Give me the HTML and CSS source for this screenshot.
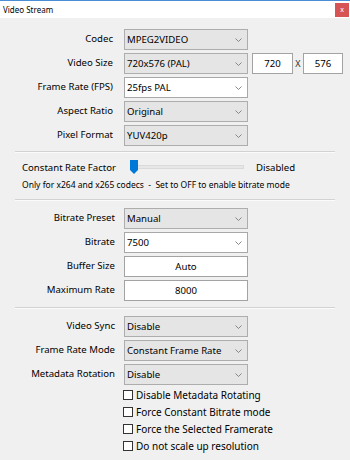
FILE: index.html
```html
<!DOCTYPE html>
<html>
<head>
<meta charset="utf-8">
<link rel="stylesheet" href="styles.css">
</head>
<body>
<div class="window">
  <div class="titlebar">
    <span class="title">Video Stream</span>
    <span class="close">x</span>
  </div>
  <div class="content">
    <div class="form form-top">
      <span class="lbl">Codec</span>
      <div class="combo ro"><span>MPEG2VIDEO</span><svg class="chev" width="7" height="4" viewBox="0 0 7 4"><path d="M0.5 0.5 L3.5 3.5 L6.5 0.5" fill="none" stroke="#7a7a7a" stroke-width="0.9"/></svg></div>

      <span class="lbl">Video Size</span>
      <div class="combo ro"><span>720x576 (PAL)</span><svg class="chev" width="7" height="4" viewBox="0 0 7 4"><path d="M0.5 0.5 L3.5 3.5 L6.5 0.5" fill="none" stroke="#7a7a7a" stroke-width="0.9"/></svg></div>
      <div class="extra">
        <div class="tbox w41">720</div>
        <span class="xsep">X</span>
        <div class="tbox w40">576</div>
      </div>

      <span class="lbl">Frame Rate (FPS)</span>
      <div class="combo ed"><span>25fps PAL</span><svg class="chev" width="7" height="4" viewBox="0 0 7 4"><path d="M0.5 0.5 L3.5 3.5 L6.5 0.5" fill="none" stroke="#7a7a7a" stroke-width="0.9"/></svg></div>

      <span class="lbl">Aspect Ratio</span>
      <div class="combo ro"><span>Original</span><svg class="chev" width="7" height="4" viewBox="0 0 7 4"><path d="M0.5 0.5 L3.5 3.5 L6.5 0.5" fill="none" stroke="#7a7a7a" stroke-width="0.9"/></svg></div>

      <span class="lbl">Pixel Format</span>
      <div class="combo ro"><span>YUV420p</span><svg class="chev" width="7" height="4" viewBox="0 0 7 4"><path d="M0.5 0.5 L3.5 3.5 L6.5 0.5" fill="none" stroke="#7a7a7a" stroke-width="0.9"/></svg></div>
    </div>

    <div class="sep sep1"></div>

    <div class="crf">
      <div class="crf-row">
        <span class="crf-lbl">Constant Rate Factor</span>
        <div class="slider">
          <div class="track"></div>
          <svg class="thumb" width="8" height="14" viewBox="0 0 8 14"><path d="M0 0 H8 V10 L4 14 L0 10 Z" fill="#0078d7"/></svg>
        </div>
        <span class="crf-val">Disabled</span>
      </div>
      <div class="note">Only for x264 and x265 codecs &nbsp;-&nbsp; Set to OFF to enable bitrate mode</div>
    </div>

    <div class="sep sep2"></div>

    <div class="form form-mid">
      <span class="lbl">Bitrate Preset</span>
      <div class="combo ro"><span>Manual</span><svg class="chev" width="7" height="4" viewBox="0 0 7 4"><path d="M0.5 0.5 L3.5 3.5 L6.5 0.5" fill="none" stroke="#7a7a7a" stroke-width="0.9"/></svg></div>

      <span class="lbl">Bitrate</span>
      <div class="combo ed"><span>7500</span><svg class="chev" width="7" height="4" viewBox="0 0 7 4"><path d="M0.5 0.5 L3.5 3.5 L6.5 0.5" fill="none" stroke="#7a7a7a" stroke-width="0.9"/></svg></div>

      <span class="lbl">Buffer Size</span>
      <div class="tbox full">Auto</div>

      <span class="lbl">Maximum Rate</span>
      <div class="tbox full">8000</div>
    </div>

    <div class="sep sep3"></div>

    <div class="form form-bot">
      <span class="lbl">Video Sync</span>
      <div class="combo ro"><span>Disable</span><svg class="chev" width="7" height="4" viewBox="0 0 7 4"><path d="M0.5 0.5 L3.5 3.5 L6.5 0.5" fill="none" stroke="#7a7a7a" stroke-width="0.9"/></svg></div>

      <span class="lbl">Frame Rate Mode</span>
      <div class="combo ro"><span>Constant Frame Rate</span><svg class="chev" width="7" height="4" viewBox="0 0 7 4"><path d="M0.5 0.5 L3.5 3.5 L6.5 0.5" fill="none" stroke="#7a7a7a" stroke-width="0.9"/></svg></div>

      <span class="lbl">Metadata Rotation</span>
      <div class="combo ro"><span>Disable</span><svg class="chev" width="7" height="4" viewBox="0 0 7 4"><path d="M0.5 0.5 L3.5 3.5 L6.5 0.5" fill="none" stroke="#7a7a7a" stroke-width="0.9"/></svg></div>
    </div>

    <div class="checks">
      <div class="chk"><span class="box"></span><span>Disable Metadata Rotating</span></div>
      <div class="chk"><span class="box"></span><span>Force Constant Bitrate mode</span></div>
      <div class="chk"><span class="box"></span><span>Force the Selected Framerate</span></div>
      <div class="chk"><span class="box"></span><span>Do not scale up resolution</span></div>
    </div>
  </div>
</div>
</body>
</html>
```

FILE: styles.css
```css
* { box-sizing: border-box; }
html, body { margin: 0; padding: 0; }
body {
  width: 350px;
  height: 460px;
  background: #f0f0f0;
  font-family: "Noto Sans", "Open Sans", sans-serif;
  font-size: 9.6px;
  color: #000;
  overflow: hidden;
}
.window { width: 350px; height: 460px; background: #f0f0f0; }

.titlebar {
  height: 18px;
  border-top: 1px solid #4a8fd6;
  background: #fff;
  display: flex;
  align-items: center;
  justify-content: space-between;
  padding-left: 3px;
  padding-right: 1px;
}
.title { font-size: 8px; line-height: 12px; color: #000; }
.close {
  width: 14px;
  height: 14px;
  background: #d65454;
  color: #fff;
  font-size: 7px;
  line-height: 13px;
  text-align: center;
  margin-top: 1px;
}

.content { display: flex; flex-direction: column; }

.form {
  display: grid;
  grid-template-columns: 124px 124px auto;
  row-gap: 3px;
  grid-auto-rows: 21px;
  align-items: center;
}
.form-top { padding-top: 11px; }
.form-top .lbl { padding-right: 11px; }
.form-mid, .form-bot { padding-top: 7px; }
.form-mid .lbl, .form-bot .lbl { padding-right: 9px; }

.lbl { grid-column: 1; text-align: right; white-space: nowrap; line-height: 14px; padding-bottom: 2px; }
.combo, .tbox.full { grid-column: 2; }
.extra { grid-column: 3; display: flex; align-items: center; height: 21px; padding-left: 4px; }

.combo {
  height: 21px;
  border: 1px solid #adadad;
  display: flex;
  align-items: center;
  justify-content: space-between;
  padding: 0 5px 0 2px;
  white-space: nowrap;
}
.combo.ro { background: #e5e5e5; }
.combo.ed { background: #fff; border-color: #a8a8a8; }
.combo span { line-height: 14px; }
.chev { display: block; flex: none; }

.tbox {
  height: 21px;
  border: 1px solid #a3a3a3;
  background: #fff;
  display: flex;
  align-items: center;
  justify-content: center;
  line-height: 14px;
}
.tbox.w41 { width: 41px; }
.tbox.w40 { width: 40px; }
.xsep { width: 10px; text-align: center; font-size: 9px; color: #333; }

.sep {
  height: 2px;
  margin: 0 15px;
  border-top: 1px solid #d2d2d2;
  border-bottom: 1px solid #fbfbfb;
}
.sep1 { margin-top: 5px; }
.sep2 { margin-top: 7px; }
.sep3 { margin-top: 6px; }

.crf { padding-left: 22px; padding-top: 6px; }
.crf-row { display: flex; align-items: center; height: 16px; }
.crf-lbl { width: 108px; white-space: nowrap; }
.slider { position: relative; width: 114px; height: 16px; display: flex; align-items: center; }
.track { width: 114px; height: 4px; background: #e7e7e7; border: 1px solid #dadada; }
.thumb { position: absolute; left: 0; top: 1px; }
.crf-val { margin-left: 12px; }
.note { font-size: 8.5px; line-height: 14px; margin-top: 3px; white-space: nowrap; }

.checks { padding-left: 123px; padding-top: 1px; display: flex; flex-direction: column; }
.chk { height: 17px; display: flex; align-items: center; gap: 3px; }
.chk span:last-child { font-size: 10px; line-height: 14px; }
.box { width: 10px; height: 10px; border: 1px solid #333; background: #fff; flex: none; }
```
